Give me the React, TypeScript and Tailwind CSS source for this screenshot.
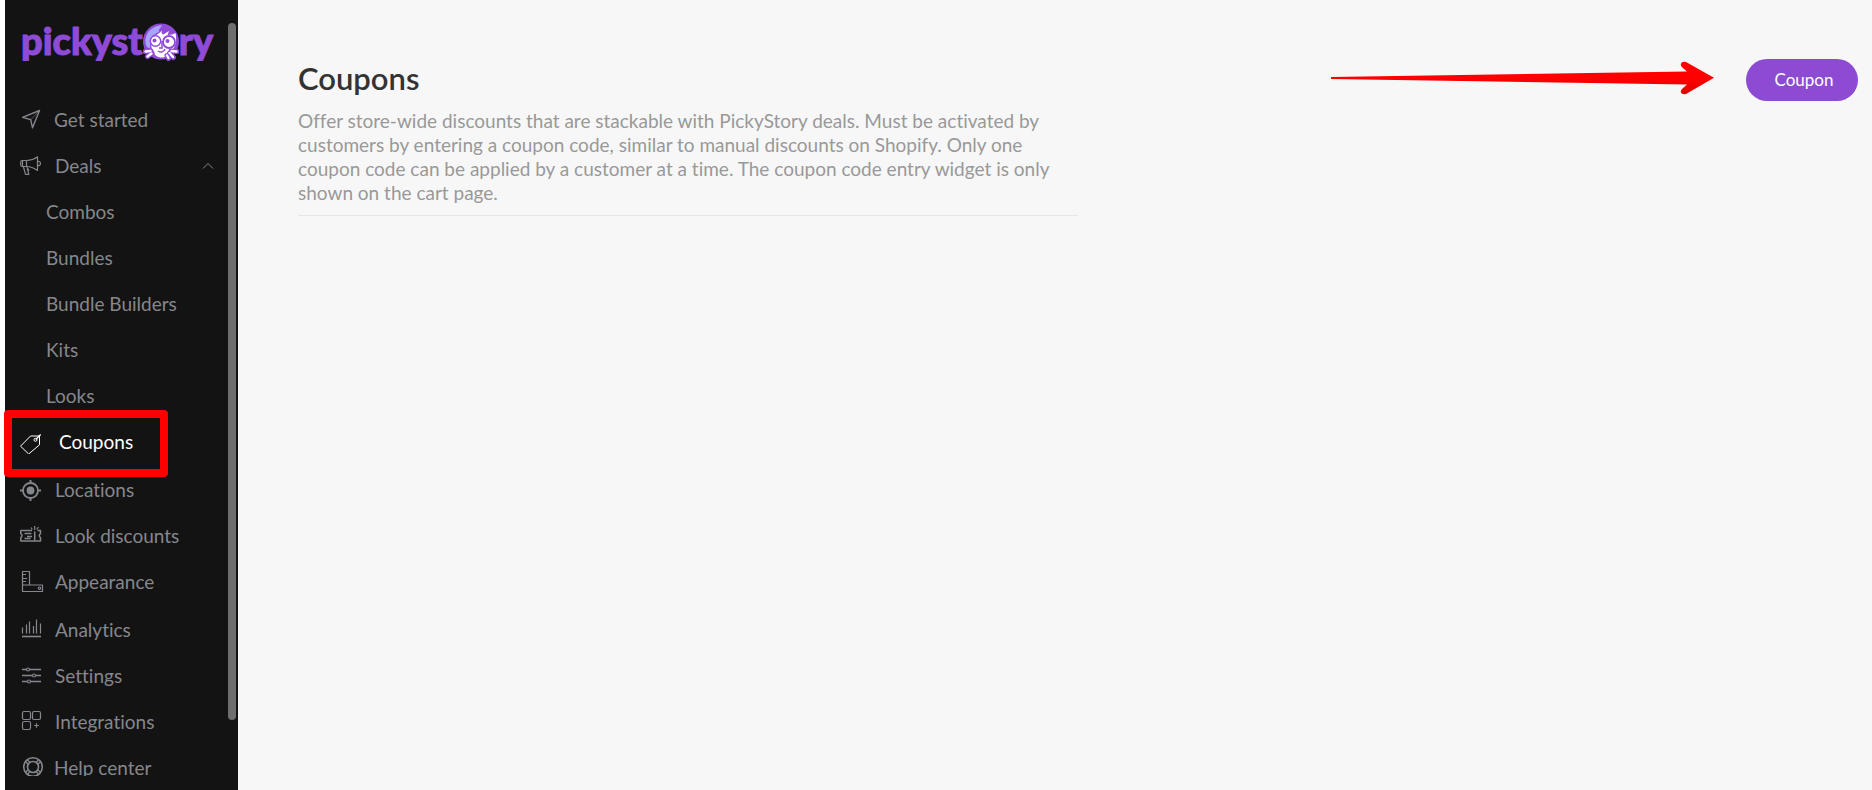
import type { ReactNode } from 'react';
import clsx from 'clsx';

function LineIcon({ children }: { children: ReactNode }) {
  return (
    <svg
      viewBox="0 0 24 24"
      className="w-6 h-6 shrink-0"
      fill="none"
      stroke="currentColor"
      strokeWidth="1.2"
      strokeLinejoin="round"
      aria-hidden="true"
    >
      {children}
    </svg>
  );
}

function PlaneIcon() {
  return (
    <LineIcon>
      <path d="M19.5 2.5 2.5 9.3l8.2 2.4 1.8 8.1z" strokeWidth="1.4" />
      <path d="M19.5 2.5 10.7 11.7" strokeWidth="0.6" />
    </LineIcon>
  );
}

function MegaphoneIcon() {
  return (
    <LineIcon>
      <path d="M2.3 6.5h4.2v6H2.3c-1 0-1.600-.8-1.600-1.800V8.300c0-1 .6-1.800 1.600-1.800z" />
      <path d="M2.5 6.5v6M6.5 6.500c4 0 7.500-1 11-3.700v13.700c-3.500-2.500-7-4-11-4" />
      <path d="M17.5 7.300c1.700-.200 3 .9 3 2.200s-1.300 2.400-3 2.200" />
      <path d="M3.5 13l2 7.300h3.300L7 13.200M7.800 14.500l1.200 2.300" />
    </LineIcon>
  );
}

function TagIcon() {
  return (
    <LineIcon>
      <path d="M10.500 6h9v8.800L8.700 24 .5 16.200z" strokeWidth="1" />
      <circle cx="15.500" cy="9.800" r="1.500" strokeWidth="1" />
      <path d="M15.700 9.500 20.700 4.500" />
    </LineIcon>
  );
}

function TargetIcon() {
  return (
    <LineIcon>
      <circle cx="10.500" cy="12.500" r="7.500" strokeWidth="1.800" />
      <circle cx="10.500" cy="12.500" r="3.900" fill="currentColor" stroke="none" />
      <path d="M10.500 2v3M10.500 20v3M0 12.500h3M18 12.500h3" strokeWidth="2" />
    </LineIcon>
  );
}

function TicketIcon() {
  return (
    <LineIcon>
      <path
        d="M12 6.500H.8v3.200c1.600.2 1.600 3.600 0 3.800v3.500h19.700v-3.500c-1.600-.2-1.600-3.600 0-3.800V6.500h-3"
        strokeWidth="1.500"
      />
      <path d="M4.500 9.500h7M7 12.500h5M4.500 14.500h6M14.700 7.500v9" strokeWidth="1.500" />
      <path d="M14.700 6V2M12.300 5.500l-1.300-2M16.700 5.500l1.800-2.500" />
    </LineIcon>
  );
}

function RulerIcon() {
  return (
    <LineIcon>
      <path d="M2.500 1.500h7v13.500h13v6.500h-20zM2.500 15h7" />
      <path d="M3 4.500h3M3 8.500h4M3 11.500h3" />
      <circle cx="19.500" cy="18.200" r="1.200" />
    </LineIcon>
  );
}

function BarsIcon() {
  return (
    <LineIcon>
      <path d="M2.500 9.500v6M6.500 6.500v9M9.500 3.500v12M13.500 8v7.500M16.500 1.500v14M20.500 5.500v10" />
      <path d="M2 18.500h19" strokeWidth="1.600" />
    </LineIcon>
  );
}

function SlidersIcon() {
  return (
    <LineIcon>
      <path
        d="M2 5.500h4.500M9.500 5.500H21M2 11.500h10M15.500 11.500H21M2 17.500h5.500M10.500 17.500H21"
        strokeWidth="1.500"
      />
      <circle cx="8" cy="5.500" r="1.500" />
      <circle cx="14" cy="11.500" r="1.500" />
      <circle cx="9" cy="17.500" r="1.500" />
    </LineIcon>
  );
}

function BlocksIcon() {
  return (
    <LineIcon>
      <rect x="2.500" y="1.500" width="8" height="8" rx="1.500" />
      <rect x="12.500" y="1.500" width="8" height="8" rx="1.500" />
      <rect x="2.500" y="11.500" width="8" height="8" rx="1.500" />
      <path d="M16.500 13.200v4.600M14.200 15.500h4.600" />
    </LineIcon>
  );
}

function LifebuoyIcon() {
  return (
    <LineIcon>
      <circle cx="13" cy="11" r="9.300" strokeWidth="1.600" />
      <circle cx="13" cy="11" r="5.500" strokeWidth="1.600" />
      <path
        d="M5.500 5.800 8.300 8.200M7.500 4l2.500 2.500M20.500 5.800l-2.800 2.400M18.500 4 16 6.500M5.500 16.200l2.800-2.400M7.500 18l2.500-2.500M20.500 16.200l-2.800-2.400M18.500 18 16 15.500"
        strokeWidth="1.300"
      />
    </LineIcon>
  );
}

function Logo() {
  return (
    <a
      href="#"
      aria-label="pickystory"
      className="flex h-[38px] ml-4 overflow-hidden font-black text-[38px] leading-[34px] text-[#8f4bd8] [-webkit-text-stroke:1px_#8f4bd8]"
    >
      <span>pickyst</span>
      <svg viewBox="0 0 36 38" className="w-9 h-[38px] shrink-0" aria-hidden="true">
        <circle cx="18" cy="18.500" r="18" fill="#8f4bd8" />
        <path
          d="M2.500 20C1.500 11 8 3 19 2c-1 3-4 4.500-3 7-3 .5-4 3-6.500 3.500C8 17 7 19 7 25c-2.500 0-4-2-4.500-5z"
          fill="#a9a4fb"
        />
        <path
          d="M8 14c4-1 8-3 11-6.500-1 3 0 4.500 2 3.500l5-3-1.500 4c4 0 6-1 8-2 1.500 7 0 13-3 17-3 5-7 8-12 7.500-6-.5-10.500-7-9.500-20.500z"
          fill="#fff"
        />
        <circle cx="12.500" cy="18" r="5.200" fill="#fff" stroke="#8f4bd8" strokeWidth="1.500" />
        <circle cx="26" cy="19" r="6" fill="#fff" stroke="#8f4bd8" strokeWidth="1.800" />
        <circle cx="11.500" cy="17.500" r="2" fill="#8f4bd8" />
        <circle cx="24.500" cy="18" r="2" fill="#8f4bd8" />
        <path d="M19 18v7h-3M15 28c3 2 6 1 7-2" fill="none" stroke="#8f4bd8" strokeWidth="1.500" />
        <path
          d="m2 28.500 6-.5M4.500 33.500l4.500-3.500M34 28.500l-6-.5M30.500 34.500l-4-4.500M25.500 35.500l-1.500-3"
          stroke="#8f4bd8"
          strokeWidth="5"
          strokeLinecap="round"
        />
        <path
          d="m2.500 28.500 5-.5M4.500 33.500l4-3M33.500 28.500l-5-.5M30 34l-3.500-4M25.500 35l-1.500-2.500"
          stroke="#fff"
          strokeWidth="2.400"
          strokeLinecap="round"
        />
      </svg>
      <span>ry</span>
    </a>
  );
}

const navItems = [
  { label: 'Get started', icon: <PlaneIcon />, gap: 'gap-[10px]' },
  {
    label: 'Deals',
    icon: <MegaphoneIcon />,
    children: ['Combos', 'Bundles', 'Bundle Builders', 'Kits', 'Looks'],
  },
  { label: 'Coupons', icon: <TagIcon />, gap: 'gap-[15px]', active: true },
  { label: 'Locations', icon: <TargetIcon /> },
  { label: 'Look discounts', icon: <TicketIcon /> },
  { label: 'Appearance', icon: <RulerIcon />, spaced: true },
  { label: 'Analytics', icon: <BarsIcon /> },
  { label: 'Settings', icon: <SlidersIcon /> },
  { label: 'Integrations', icon: <BlocksIcon /> },
  { label: 'Help center', icon: <LifebuoyIcon />, gap: 'gap-[10px]' },
];

function Sidebar() {
  return (
    <aside className="flex h-screen w-[233px] shrink-0 bg-[#131313] text-[19px] text-[#85878c]">
      <div className="flex flex-col flex-1 pt-[23px] pb-[14px]">
        <Logo />
        <nav className="flex-1 min-h-0 mt-9 overflow-y-clip">
          <ul>
            {navItems.map((item) => (
              <li key={item.label} className={clsx('relative', (item.active || item.spaced) && 'mb-[2px]')}>
                <a
                  href="#"
                  aria-current={item.active ? 'page' : undefined}
                  className={clsx(
                    'flex items-center h-[46px] pl-[15px] pr-[14px]',
                    item.gap ?? 'gap-[11px]',
                    item.active && 'text-white'
                  )}
                >
                  {item.icon}
                  <span>{item.label}</span>
                  {item.children && (
                    <svg
                      viewBox="0 0 12 8"
                      className="w-3 h-2 ml-auto"
                      fill="none"
                      stroke="currentColor"
                      aria-hidden="true"
                    >
                      <path d="m1 6.500 5-5 5 5" />
                    </svg>
                  )}
                </a>
                {item.active && (
                  <span className="absolute -left-px -top-[9px] w-[164px] h-[67px] rounded-sm border-8 border-[#fe0000] pointer-events-none" />
                )}
                {item.children && (
                  <ul>
                    {item.children.map((child) => (
                      <li key={child}>
                        <a href="#" className="flex items-center h-[46px] pl-[41px]">
                          {child}
                        </a>
                      </li>
                    ))}
                  </ul>
                )}
              </li>
            ))}
          </ul>
        </nav>
      </div>
      {/* Scroll thumb */}
      <div className="w-2 mt-[23px] mb-[70px] mr-[2px] rounded-full bg-[#6e6e6e]" />
    </aside>
  );
}

function PointerArrow() {
  return (
    <svg viewBox="0 0 384 34" className="w-[384px] h-[34px] mt-[2px] shrink-0" aria-hidden="true">
      <defs>
        <linearGradient id="arrow-fill" x1="0" y1="0" x2="0" y2="1">
          <stop offset="0.5" stopColor="#ff0000" />
          <stop offset="1" stopColor="#e00000" />
        </linearGradient>
      </defs>
      <path
        d="M1 16 357 10.500l-5-4.300C349 3 352-.5 356 1L384 16.700 356 33c-4 1.500-7-2-4-5l5-4.500L1 18z"
        fill="url(#arrow-fill)"
      />
    </svg>
  );
}

export default function App() {
  return (
    <div className="flex min-h-screen pl-[5px] bg-white font-[Lato,sans-serif] [font-variant-ligatures:none]">
      <Sidebar />
      <main className="flex flex-1 items-start bg-[#f7f7f7] pt-[59px] pl-[60px] pr-[14px]">
        <header className="w-1/2 border-b border-[#e6e6e6] pb-[10px]">
          <h1 className="mb-3 text-[31px] leading-[38px] font-semibold text-[#333]">Coupons</h1>
          <p className="text-[19px] leading-6 text-[#999]">
            Offer store-wide discounts that are stackable with PickyStory deals. Must be activated by customers by
            entering a coupon code, similar to manual discounts on Shopify. Only one coupon code can be applied by a
            customer at a time. The coupon code entry widget is only shown on the cart page.
          </p>
        </header>
        <div className="flex flex-1 items-start justify-end gap-8">
          <PointerArrow />
          <button type="button" className="w-28 h-[42px] pl-1 rounded-full bg-[#8c4bd2] text-[17px] text-white">
            Coupon
          </button>
        </div>
      </main>
    </div>
  );
}
